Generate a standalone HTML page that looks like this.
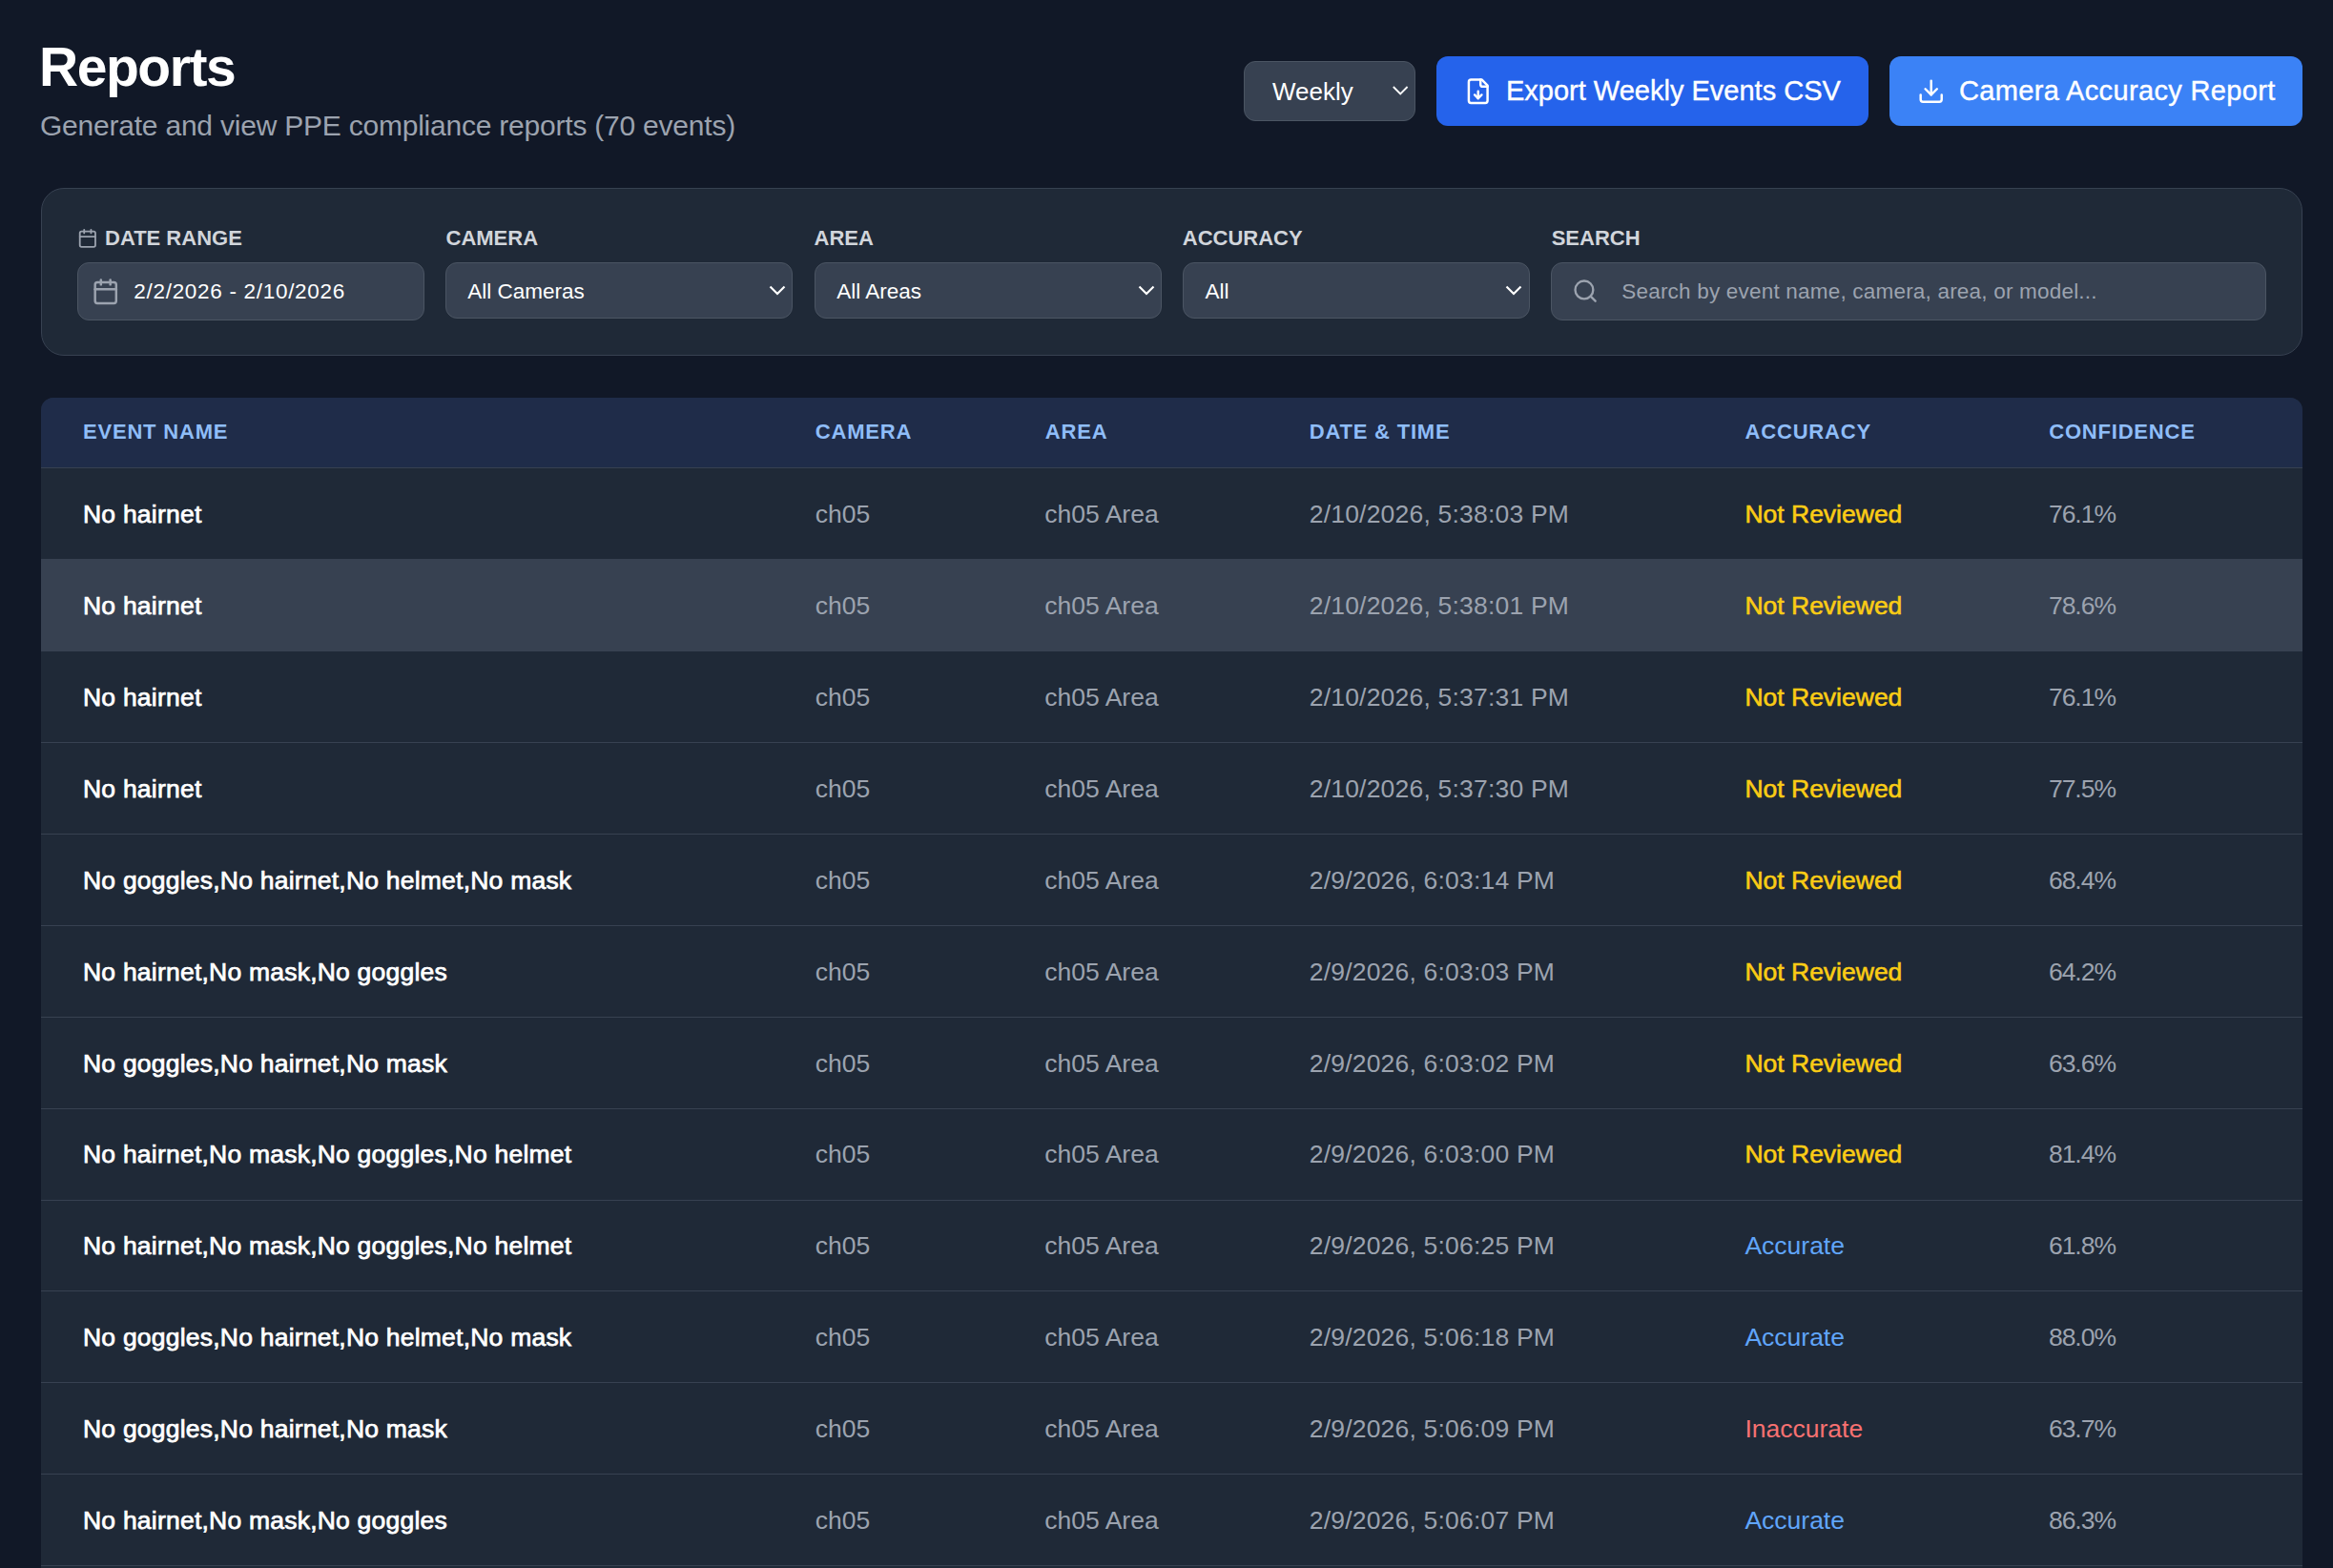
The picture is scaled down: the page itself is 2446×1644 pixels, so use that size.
<!DOCTYPE html>
<html><head><meta charset="utf-8"><title>Reports</title>
<style>
*{box-sizing:border-box;margin:0;padding:0}
html,body{width:2446px;height:1644px;overflow:hidden;background:#111827;font-family:"Liberation Sans",sans-serif;}
.a{position:absolute;white-space:nowrap;line-height:1}
svg{position:absolute;display:block}
.ic{fill:none;stroke-linecap:round;stroke-linejoin:round}
.title{left:41px;top:42px;font-size:57px;font-weight:700;color:#fff;letter-spacing:-1.45px}
.sub{left:42px;top:116.6px;font-size:30px;color:#9ca3af;letter-spacing:-0.22px}
.sel{position:absolute;background:#374151;border:1.1px solid #4b5563;border-radius:12px}
.btn{position:absolute;border-radius:12px;top:59px;height:73px}
.btxt{font-size:29px;color:#fff;top:80.5px;-webkit-text-stroke:0.4px #fff}
.card{position:absolute;left:43px;top:197px;width:2371px;height:176px;background:#1f2937;border:1px solid #374151;border-radius:24px}
.lab{font-size:22px;font-weight:700;color:#d1d5db;letter-spacing:0px;top:239.2px}
.inp{font-size:22.5px;color:#fff;top:294.8px}
.chev{}
.tbl{position:absolute;left:43px;top:417px;width:2371px;height:1300px;background:#1f2937;border-radius:13px 13px 0 0;overflow:hidden}
.thead{position:absolute;left:0;top:0;width:100%;height:73.3px;background:#1f2c49}
.hd{position:absolute;top:25.1px;font-size:22px;font-weight:700;color:#8fbdf8;letter-spacing:0.8px;white-space:nowrap;line-height:1}
.row{position:absolute;left:0;width:100%;height:95.9px;border-top:1.8px solid #374151}
.row.hl{background:#374151}
.c{position:absolute;top:34.87px;font-size:26.5px;white-space:nowrap;line-height:1}
.ev{color:#fff;-webkit-text-stroke:0.75px #fff;letter-spacing:0.22px}
.dt{letter-spacing:0.2px}
.cf{letter-spacing:-1px}
.g{color:#9ca3af}
.nr{color:#facc15;-webkit-text-stroke:0.6px #facc15}
.ac{color:#60a5fa}
.ia{color:#f87171}
</style></head><body>
<div class="a title">Reports</div>
<div class="a sub">Generate and view PPE compliance reports (70 events)</div>

<div class="sel" style="left:1304px;top:64px;width:180px;height:63px"></div>
<div class="a" style="left:1334px;top:83px;font-size:26px;color:#fff">Weekly</div>
<svg width="20" height="14" viewBox="0 0 20 14" style="left:1457.5px;top:88px"><path d="M2.8 3 L10.2 10.4 L17.6 3" fill="none" stroke="#fff" stroke-width="1.8"/></svg>

<div class="btn" style="left:1506px;width:453px;background:#2563eb"></div>
<svg class="ic" width="29.5" height="29.5" viewBox="0 0 24 24" style="left:1535.3px;top:80.8px" stroke="#fff" stroke-width="2"><path d="M15 2H6a2 2 0 0 0-2 2v16a2 2 0 0 0 2 2h12a2 2 0 0 0 2-2V7Z"/><path d="M14 2v4a2 2 0 0 0 2 2h4"/><path d="M12 18v-6"/><path d="m9 15 3 3 3-3"/></svg>
<div class="a btxt" style="left:1579px">Export Weekly Events CSV</div>

<div class="btn" style="left:1981px;width:433px;background:#3b82f6"></div>
<svg class="ic" width="29.4" height="29.4" viewBox="0 0 24 24" style="left:2010px;top:81px" stroke="#fff" stroke-width="2"><path d="M21 15v4a2 2 0 0 1-2 2H5a2 2 0 0 1-2-2v-4"/><polyline points="7 10 12 15 17 10"/><line x1="12" x2="12" y1="15" y2="3"/></svg>
<div class="a btxt" style="left:2054px;letter-spacing:0.35px">Camera Accuracy Report</div>

<div class="card"></div>
<svg class="ic" width="21.7" height="21.7" viewBox="0 0 24 24" style="left:81.1px;top:239.2px" stroke="#9ca3af" stroke-width="2"><path d="M8 2v4"/><path d="M16 2v4"/><rect width="18" height="18" x="3" y="4" rx="2"/><path d="M3 10h18"/></svg>
<div class="a lab" style="left:110px">DATE RANGE</div>
<div class="a lab" style="left:467.5px">CAMERA</div>
<div class="a lab" style="left:853.6px">AREA</div>
<div class="a lab" style="left:1239.8px">ACCURACY</div>
<div class="a lab" style="left:1626.7px">SEARCH</div>

<div class="sel" style="left:81px;top:275px;width:364px;height:61px"></div>
<svg class="ic" width="29.5" height="29.5" viewBox="0 0 24 24" style="left:95.7px;top:290.8px" stroke="#9ca3af" stroke-width="2"><path d="M8 2v4"/><path d="M16 2v4"/><rect width="18" height="18" x="3" y="4" rx="2"/><path d="M3 10h18"/></svg>
<div class="a inp" style="left:140.3px;letter-spacing:0.7px">2/2/2026 - 2/10/2026</div>

<div class="sel" style="left:467.25px;top:275px;width:364px;height:59px"></div>
<div class="a inp" style="left:490.2px">All Cameras</div>
<svg width="20" height="14" viewBox="0 0 20 14" style="left:805px;top:298px"><path d="M2.5 2.5 L10 10 L17.5 2.5" fill="none" stroke="#fff" stroke-width="2.2"/></svg>

<div class="sel" style="left:853.5px;top:275px;width:364.3px;height:59px"></div>
<div class="a inp" style="left:877.2px">All Areas</div>
<svg width="20" height="14" viewBox="0 0 20 14" style="left:1192px;top:298px"><path d="M2.5 2.5 L10 10 L17.5 2.5" fill="none" stroke="#fff" stroke-width="2.2"/></svg>

<div class="sel" style="left:1239.75px;top:275px;width:364.25px;height:59px"></div>
<div class="a inp" style="left:1263.5px">All</div>
<svg width="20" height="14" viewBox="0 0 20 14" style="left:1577px;top:298px"><path d="M2.5 2.5 L10 10 L17.5 2.5" fill="none" stroke="#fff" stroke-width="2.2"/></svg>

<div class="sel" style="left:1626px;top:275px;width:750px;height:61px"></div>
<svg class="ic" width="28.2" height="28.2" viewBox="0 0 24 24" style="left:1648.4px;top:291px" stroke="#9ca3af" stroke-width="2"><circle cx="11" cy="11" r="8"/><path d="m21 21-4.3-4.3"/></svg>
<div class="a inp" style="left:1700.3px;color:#9ca3af;letter-spacing:0.2px">Search by event name, camera, area, or model...</div>

<div class="tbl">
<div class="thead">
<div class="hd" style="left:44px">EVENT NAME</div>
<div class="hd" style="left:811.8px">CAMERA</div>
<div class="hd" style="left:1052.8px">AREA</div>
<div class="hd" style="left:1329.7px">DATE &amp; TIME</div>
<div class="hd" style="left:1786.6px">ACCURACY</div>
<div class="hd" style="left:2105.2px">CONFIDENCE</div>
</div>
<div class="row" style="top:73.30px"><div class="c ev" style="left:44.0px">No hairnet</div><div class="c g" style="left:811.8px">ch05</div><div class="c g" style="left:1052.3px">ch05 Area</div><div class="c g dt" style="left:1329.7px">2/10/2026, 5:38:03 PM</div><div class="c nr" style="left:1786.4px">Not Reviewed</div><div class="c g cf" style="left:2104.9px">76.1%</div></div>
<div class="row hl" style="top:169.20px"><div class="c ev" style="left:44.0px">No hairnet</div><div class="c g" style="left:811.8px">ch05</div><div class="c g" style="left:1052.3px">ch05 Area</div><div class="c g dt" style="left:1329.7px">2/10/2026, 5:38:01 PM</div><div class="c nr" style="left:1786.4px">Not Reviewed</div><div class="c g cf" style="left:2104.9px">78.6%</div></div>
<div class="row" style="top:265.10px"><div class="c ev" style="left:44.0px">No hairnet</div><div class="c g" style="left:811.8px">ch05</div><div class="c g" style="left:1052.3px">ch05 Area</div><div class="c g dt" style="left:1329.7px">2/10/2026, 5:37:31 PM</div><div class="c nr" style="left:1786.4px">Not Reviewed</div><div class="c g cf" style="left:2104.9px">76.1%</div></div>
<div class="row" style="top:361.00px"><div class="c ev" style="left:44.0px">No hairnet</div><div class="c g" style="left:811.8px">ch05</div><div class="c g" style="left:1052.3px">ch05 Area</div><div class="c g dt" style="left:1329.7px">2/10/2026, 5:37:30 PM</div><div class="c nr" style="left:1786.4px">Not Reviewed</div><div class="c g cf" style="left:2104.9px">77.5%</div></div>
<div class="row" style="top:456.90px"><div class="c ev" style="left:44.0px">No goggles,No hairnet,No helmet,No mask</div><div class="c g" style="left:811.8px">ch05</div><div class="c g" style="left:1052.3px">ch05 Area</div><div class="c g dt" style="left:1329.7px">2/9/2026, 6:03:14 PM</div><div class="c nr" style="left:1786.4px">Not Reviewed</div><div class="c g cf" style="left:2104.9px">68.4%</div></div>
<div class="row" style="top:552.80px"><div class="c ev" style="left:44.0px">No hairnet,No mask,No goggles</div><div class="c g" style="left:811.8px">ch05</div><div class="c g" style="left:1052.3px">ch05 Area</div><div class="c g dt" style="left:1329.7px">2/9/2026, 6:03:03 PM</div><div class="c nr" style="left:1786.4px">Not Reviewed</div><div class="c g cf" style="left:2104.9px">64.2%</div></div>
<div class="row" style="top:648.70px"><div class="c ev" style="left:44.0px">No goggles,No hairnet,No mask</div><div class="c g" style="left:811.8px">ch05</div><div class="c g" style="left:1052.3px">ch05 Area</div><div class="c g dt" style="left:1329.7px">2/9/2026, 6:03:02 PM</div><div class="c nr" style="left:1786.4px">Not Reviewed</div><div class="c g cf" style="left:2104.9px">63.6%</div></div>
<div class="row" style="top:744.60px"><div class="c ev" style="left:44.0px">No hairnet,No mask,No goggles,No helmet</div><div class="c g" style="left:811.8px">ch05</div><div class="c g" style="left:1052.3px">ch05 Area</div><div class="c g dt" style="left:1329.7px">2/9/2026, 6:03:00 PM</div><div class="c nr" style="left:1786.4px">Not Reviewed</div><div class="c g cf" style="left:2104.9px">81.4%</div></div>
<div class="row" style="top:840.50px"><div class="c ev" style="left:44.0px">No hairnet,No mask,No goggles,No helmet</div><div class="c g" style="left:811.8px">ch05</div><div class="c g" style="left:1052.3px">ch05 Area</div><div class="c g dt" style="left:1329.7px">2/9/2026, 5:06:25 PM</div><div class="c ac" style="left:1786.4px">Accurate</div><div class="c g cf" style="left:2104.9px">61.8%</div></div>
<div class="row" style="top:936.40px"><div class="c ev" style="left:44.0px">No goggles,No hairnet,No helmet,No mask</div><div class="c g" style="left:811.8px">ch05</div><div class="c g" style="left:1052.3px">ch05 Area</div><div class="c g dt" style="left:1329.7px">2/9/2026, 5:06:18 PM</div><div class="c ac" style="left:1786.4px">Accurate</div><div class="c g cf" style="left:2104.9px">88.0%</div></div>
<div class="row" style="top:1032.30px"><div class="c ev" style="left:44.0px">No goggles,No hairnet,No mask</div><div class="c g" style="left:811.8px">ch05</div><div class="c g" style="left:1052.3px">ch05 Area</div><div class="c g dt" style="left:1329.7px">2/9/2026, 5:06:09 PM</div><div class="c ia" style="left:1786.4px">Inaccurate</div><div class="c g cf" style="left:2104.9px">63.7%</div></div>
<div class="row" style="top:1128.20px"><div class="c ev" style="left:44.0px">No hairnet,No mask,No goggles</div><div class="c g" style="left:811.8px">ch05</div><div class="c g" style="left:1052.3px">ch05 Area</div><div class="c g dt" style="left:1329.7px">2/9/2026, 5:06:07 PM</div><div class="c ac" style="left:1786.4px">Accurate</div><div class="c g cf" style="left:2104.9px">86.3%</div></div>
<div class="row" style="top:1224.10px"><div class="c ev" style="left:44.0px">No hairnet</div><div class="c g" style="left:811.8px">ch05</div><div class="c g" style="left:1052.3px">ch05 Area</div><div class="c g dt" style="left:1329.7px">2/9/2026, 5:06:00 PM</div><div class="c ac" style="left:1786.4px">Accurate</div><div class="c g cf" style="left:2104.9px">70.0%</div></div>
</div>
</body></html>
